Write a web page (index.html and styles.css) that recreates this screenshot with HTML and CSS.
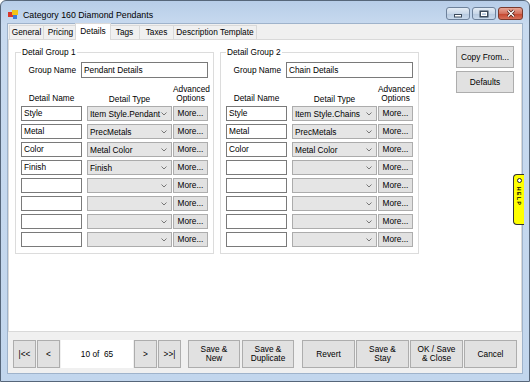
FILE: index.html
```html
<!DOCTYPE html>
<html lang="en">
<head>
  <meta charset="UTF-8" />
  <title>Category 160 Diamond Pendants</title>
  <link rel="stylesheet" href="styles.css">
</head>
<body>
  <div class="window">
    <div class="titlebar">
      <svg class="app-icon" width="10" height="9" viewBox="0 0 10 9">
        <rect x="0" y="2" width="5" height="5" fill="#d9372b"/>
        <rect x="4" y="0" width="6" height="5" fill="#f2c318"/>
        <rect x="5" y="5" width="4" height="4" fill="#3d7bd6"/>
      </svg>
      <span class="title">Category 160 Diamond Pendants</span>
      <div class="caption-buttons">
        <div class="cap">
          <svg width="10" height="8" viewBox="0 0 10 8"><rect x="1.5" y="4.5" width="7" height="2.5" fill="#fff" stroke="#3b4a5c"/></svg>
        </div>
        <div class="cap">
          <svg width="10" height="8" viewBox="0 0 10 8"><rect x="1.5" y="1.5" width="7" height="5" fill="none" stroke="#3b4a5c" stroke-width="2"/><rect x="2.5" y="2.5" width="5" height="3" fill="none" stroke="#fff"/></svg>
        </div>
        <div class="cap cap-close">
          <svg width="10" height="9" viewBox="0 0 10 9"><path d="M2 1.5 L8 7.5 M8 1.5 L2 7.5" stroke="#4a1a12" stroke-width="3"/><path d="M2 1.5 L8 7.5 M8 1.5 L2 7.5" stroke="#fff" stroke-width="1.4"/></svg>
        </div>
      </div>
    </div>

    <div class="client">
      <div class="tabs">
        <div class="tab tab-general">General</div>
        <div class="tab tab-pricing">Pricing</div>
        <div class="tab active">Details</div>
        <div class="tab tab-tags">Tags</div>
        <div class="tab tab-taxes">Taxes</div>
        <div class="tab tab-desc">Description Template</div>
      </div>

      <div class="tabpage">
        <fieldset class="group">
          <legend>Detail Group 1</legend>
          <div class="group-name">
            <span>Group Name</span>
            <div class="textbox wide">Pendant Details</div>
          </div>
          <div class="headers">
            <span class="h-name">Detail Name</span>
            <span class="h-type">Detail Type</span>
            <span class="h-adv">Advanced<br>Options</span>
          </div>
          <div class="rows">
            <div class="row"><div class="textbox">Style</div><div class="select"><span>Item Style.Pendant</span><svg width="6" height="4" viewBox="0 0 6 4"><path d="M0.5 0.5 L3 3 L5.5 0.5" fill="none" stroke="#777"/></svg></div><div class="btn more">More...</div></div>
            <div class="row"><div class="textbox">Metal</div><div class="select"><span>PrecMetals</span><svg width="6" height="4" viewBox="0 0 6 4"><path d="M0.5 0.5 L3 3 L5.5 0.5" fill="none" stroke="#777"/></svg></div><div class="btn more">More...</div></div>
            <div class="row"><div class="textbox">Color</div><div class="select"><span>Metal Color</span><svg width="6" height="4" viewBox="0 0 6 4"><path d="M0.5 0.5 L3 3 L5.5 0.5" fill="none" stroke="#777"/></svg></div><div class="btn more">More...</div></div>
            <div class="row"><div class="textbox">Finish</div><div class="select"><span>Finish</span><svg width="6" height="4" viewBox="0 0 6 4"><path d="M0.5 0.5 L3 3 L5.5 0.5" fill="none" stroke="#777"/></svg></div><div class="btn more">More...</div></div>
            <div class="row"><div class="textbox"></div><div class="select"><span></span><svg width="6" height="4" viewBox="0 0 6 4"><path d="M0.5 0.5 L3 3 L5.5 0.5" fill="none" stroke="#777"/></svg></div><div class="btn more">More...</div></div>
            <div class="row"><div class="textbox"></div><div class="select"><span></span><svg width="6" height="4" viewBox="0 0 6 4"><path d="M0.5 0.5 L3 3 L5.5 0.5" fill="none" stroke="#777"/></svg></div><div class="btn more">More...</div></div>
            <div class="row"><div class="textbox"></div><div class="select"><span></span><svg width="6" height="4" viewBox="0 0 6 4"><path d="M0.5 0.5 L3 3 L5.5 0.5" fill="none" stroke="#777"/></svg></div><div class="btn more">More...</div></div>
            <div class="row"><div class="textbox"></div><div class="select"><span></span><svg width="6" height="4" viewBox="0 0 6 4"><path d="M0.5 0.5 L3 3 L5.5 0.5" fill="none" stroke="#777"/></svg></div><div class="btn more">More...</div></div>
          </div>
        </fieldset>

        <fieldset class="group">
          <legend>Detail Group 2</legend>
          <div class="group-name">
            <span>Group Name</span>
            <div class="textbox wide">Chain Details</div>
          </div>
          <div class="headers">
            <span class="h-name">Detail Name</span>
            <span class="h-type">Detail Type</span>
            <span class="h-adv">Advanced<br>Options</span>
          </div>
          <div class="rows">
            <div class="row"><div class="textbox">Style</div><div class="select"><span>Item Style.Chains</span><svg width="6" height="4" viewBox="0 0 6 4"><path d="M0.5 0.5 L3 3 L5.5 0.5" fill="none" stroke="#777"/></svg></div><div class="btn more">More...</div></div>
            <div class="row"><div class="textbox">Metal</div><div class="select"><span>PrecMetals</span><svg width="6" height="4" viewBox="0 0 6 4"><path d="M0.5 0.5 L3 3 L5.5 0.5" fill="none" stroke="#777"/></svg></div><div class="btn more">More...</div></div>
            <div class="row"><div class="textbox">Color</div><div class="select"><span>Metal Color</span><svg width="6" height="4" viewBox="0 0 6 4"><path d="M0.5 0.5 L3 3 L5.5 0.5" fill="none" stroke="#777"/></svg></div><div class="btn more">More...</div></div>
            <div class="row"><div class="textbox"></div><div class="select"><span></span><svg width="6" height="4" viewBox="0 0 6 4"><path d="M0.5 0.5 L3 3 L5.5 0.5" fill="none" stroke="#777"/></svg></div><div class="btn more">More...</div></div>
            <div class="row"><div class="textbox"></div><div class="select"><span></span><svg width="6" height="4" viewBox="0 0 6 4"><path d="M0.5 0.5 L3 3 L5.5 0.5" fill="none" stroke="#777"/></svg></div><div class="btn more">More...</div></div>
            <div class="row"><div class="textbox"></div><div class="select"><span></span><svg width="6" height="4" viewBox="0 0 6 4"><path d="M0.5 0.5 L3 3 L5.5 0.5" fill="none" stroke="#777"/></svg></div><div class="btn more">More...</div></div>
            <div class="row"><div class="textbox"></div><div class="select"><span></span><svg width="6" height="4" viewBox="0 0 6 4"><path d="M0.5 0.5 L3 3 L5.5 0.5" fill="none" stroke="#777"/></svg></div><div class="btn more">More...</div></div>
            <div class="row"><div class="textbox"></div><div class="select"><span></span><svg width="6" height="4" viewBox="0 0 6 4"><path d="M0.5 0.5 L3 3 L5.5 0.5" fill="none" stroke="#777"/></svg></div><div class="btn more">More...</div></div>
          </div>
        </fieldset>

        <div class="side-buttons">
          <div class="btn side">Copy From...</div>
          <div class="btn side">Defaults</div>
        </div>
      </div>

      <div class="footer">
        <div class="btn nav">|&lt;&lt;</div>
        <div class="btn nav">&lt;</div>
        <div class="position">10 of&nbsp; 65</div>
        <div class="btn nav">&gt;</div>
        <div class="btn nav">&gt;&gt;|</div>
        <div class="btn action first">Save &amp;<br>New</div>
        <div class="btn action gap2">Save &amp;<br>Duplicate</div>
        <div class="btn action gap9">Revert</div>
        <div class="btn action">Save &amp;<br>Stay</div>
        <div class="btn action">OK / Save<br>&amp; Close</div>
        <div class="btn action">Cancel</div>
      </div>
    </div>

    <div class="help-tab">
      <span class="help-dot"></span>
      <span class="help-text">HELP</span>
    </div>
  </div>
</body>
</html>
```

FILE: styles.css
```css
body {
  margin: 0;
  font-family: "Liberation Sans", Arial, sans-serif;
  font-size: 8.3px;
  color: #000;
  background: #fff;
}

.window {
  position: relative;
  width: 530px;
  height: 382px;
  box-sizing: border-box;
  border: 1px solid #56667a;
  border-radius: 6px 6px 0 0;
  background: linear-gradient(#b7cde8, #c8daef 24px, #c2d6ed);
  display: flex;
  flex-direction: column;
  overflow: hidden;
}

.titlebar {
  height: 22px;
  display: flex;
  align-items: flex-start;
  padding: 0 6px 0 7px;
}

.app-icon {
  margin-top: 9px;
}

.title {
  margin-left: 5px;
  margin-top: 9px;
  font-size: 8.8px;
  color: #000;
}

.caption-buttons {
  margin-left: auto;
  margin-top: 6px;
  display: flex;
  gap: 2px;
}

.cap {
  width: 24px;
  height: 13px;
  box-sizing: border-box;
  border: 1px solid #6d819b;
  border-radius: 3px;
  background: linear-gradient(#e4ecf5, #c9d8e9 50%, #b5c8de 51%, #c8d9ec);
  display: flex;
  align-items: center;
  justify-content: center;
}

.cap-close {
  width: 25px;
  border-color: #7a3a2e;
  background: linear-gradient(#e8a797, #d3705d 50%, #c3432c 51%, #d6705a);
}

.client {
  flex: 1;
  margin: 0 6px 7px 6px;
  border: 1px solid #9fb3cb;
  background: #f0f0f0;
  display: flex;
  flex-direction: column;
}

.tabs {
  height: 15px;
  display: flex;
  align-items: flex-end;
  padding-left: 1px;
}

.tab {
  height: 14px;
  box-sizing: border-box;
  padding: 0 1px;
  line-height: 13px;
  text-align: center;
  white-space: nowrap;
  border: 1px solid #d9d9d9;
  border-bottom: none;
  margin-right: -1px;
  background: #f0f0f0;
}

.tab-general { width: 35px; }
.tab-pricing { width: 35px; }
.tab-tags { width: 31px; }
.tab-taxes { width: 35px; }
.tab-desc { width: 84px; }

.tab.active {
  position: relative;
  z-index: 1;
  width: 36px;
  height: 17px;
  margin: 0 -2px -1px -2px;
  line-height: 14px;
  background: #fff;
}

.tabpage {
  flex: 1;
  display: flex;
  align-items: flex-start;
  gap: 6px;
  padding: 6px 7px 0 6px;
  background: #fff;
  border: 1px solid #d9d9d9;
}

.group {
  margin: 1px 0 0 0;
  padding: 0 5px 6px 5px;
  border: 1px solid #dcdcdc;
  min-width: 0;
}

.group legend {
  padding: 0 1px;
  line-height: 10px;
}

.group-name {
  display: flex;
  justify-content: flex-end;
  align-items: center;
  gap: 5px;
  margin-top: 5px;
}

.textbox {
  width: 61px;
  height: 15px;
  box-sizing: border-box;
  border: 1px solid #7a7a7a;
  background: #fff;
  padding: 0 2px;
  line-height: 13px;
  white-space: nowrap;
}

.textbox.wide {
  width: 127px;
  height: 16px;
  line-height: 14px;
}

.headers {
  display: flex;
  align-items: flex-end;
  margin-top: 7px;
  margin-bottom: 3px;
  line-height: 9px;
  text-align: center;
}

.h-name {
  width: 61px;
}

.h-type {
  width: 85px;
  margin-left: 5px;
  margin-bottom: -1px;
}

.h-adv {
  width: 35px;
  margin-left: 1px;
}

.rows {
  display: flex;
  flex-direction: column;
  gap: 3px;
}

.row {
  display: flex;
  height: 15px;
}

.select {
  width: 85px;
  margin-left: 5px;
  box-sizing: border-box;
  border: 1px solid #acacac;
  background: #e5e5e5;
  display: flex;
  align-items: center;
  justify-content: space-between;
  padding: 0 4px 0 2px;
  white-space: nowrap;
}

.select svg {
  margin-top: 1px;
}

.btn {
  box-sizing: border-box;
  border: 1px solid #adadad;
  background: #e1e1e1;
  display: flex;
  align-items: center;
  justify-content: center;
  text-align: center;
  line-height: 9px;
}

.more {
  width: 35px;
  margin-left: 1px;
}

.side-buttons {
  margin-left: auto;
  display: flex;
  flex-direction: column;
  gap: 3px;
}

.side {
  width: 58px;
  height: 22px;
}

.footer {
  height: 41px;
  box-sizing: border-box;
  display: flex;
  align-items: flex-start;
  padding: 8px 0 0 5px;
}

.footer .btn,
.position {
  height: 28px;
}

.nav {
  width: 23px;
  margin-right: 1px;
}

.position {
  width: 72px;
  margin-right: 1px;
  background: #fff;
  display: flex;
  align-items: center;
  justify-content: center;
}

.action {
  width: 53px;
  margin-left: 1px;
}

.action.first {
  margin-left: 6px;
  width: 52px;
}

.action.gap2 {
  margin-left: 2px;
  width: 52px;
}

.action.gap9 {
  margin-left: 8px;
}

.help-tab {
  position: absolute;
  left: 512px;
  top: 173px;
  width: 11px;
  height: 51px;
  box-sizing: border-box;
  background: #ffff00;
  border: 1px solid #333;
  border-right: none;
  border-radius: 4px 0 0 4px;
  display: flex;
  flex-direction: column;
  align-items: center;
  padding-top: 3px;
}

.help-dot {
  width: 5px;
  height: 5px;
  box-sizing: border-box;
  border: 1.5px solid #222;
  border-radius: 50%;
  background: #fff;
}

.help-text {
  writing-mode: vertical-rl;
  font-size: 5px;
  font-weight: bold;
  letter-spacing: 1.5px;
  margin-top: 4px;
}
```
